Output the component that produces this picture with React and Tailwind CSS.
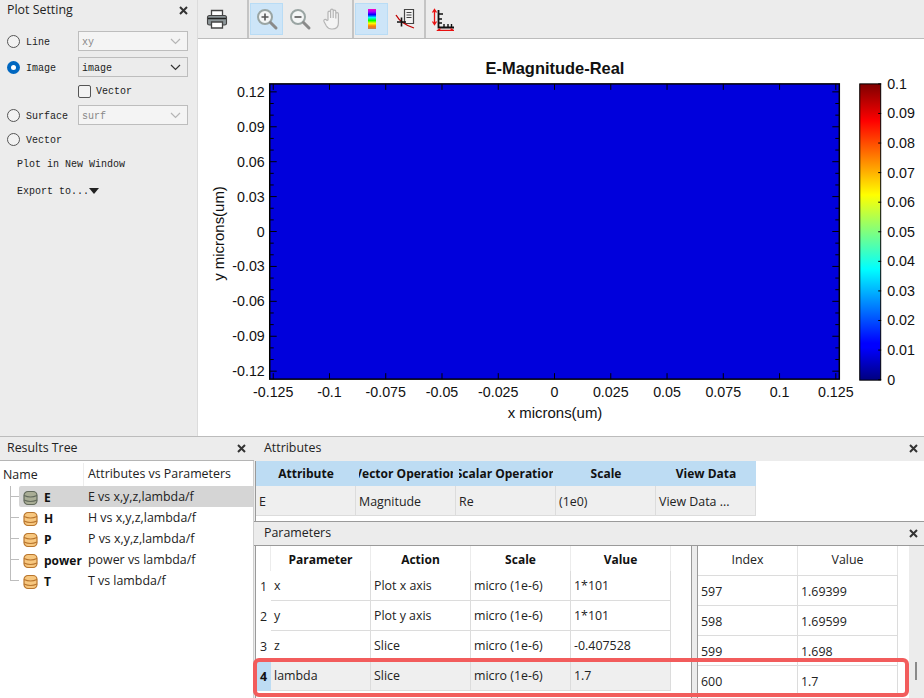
import React from "react";

const mono = "font-['Liberation_Mono',monospace] text-[10px] text-[#222]";
const ui = "font-['Open_Sans','Noto_Sans',sans-serif]";

function Close({ className = "" }) {
  return (
    <svg width="9" height="9" viewBox="0 0 9 9" className={className}>
      <path d="M1 1 8 8M8 1 1 8" stroke="#333" strokeWidth="2" />
    </svg>
  );
}

function Radio({ on }) {
  return on ? (
    <span className="flex h-[13px] w-[13px] shrink-0 items-center justify-center rounded-full bg-[#0067c0]">
      <span className="h-[5px] w-[5px] rounded-full bg-white" />
    </span>
  ) : (
    <span className="h-[13px] w-[13px] shrink-0 rounded-full border border-[#555] bg-[#f2f2f2]" />
  );
}

function Select({ value, disabled }) {
  return (
    <div className={`flex h-[20px] w-[110px] items-center justify-between border border-[#bdbdbd] pl-[3px] pr-[6px] ${disabled ? "bg-[#f4f4f4] text-[#888]" : "bg-[#ececec]"}`}>
      <span className={`pt-[2px] ${disabled ? "text-[#888]" : "text-[#222]"}`}>{value}</span>
      <svg width="11" height="7" viewBox="0 0 11 7">
        <path d="M1 1 5.500 5.500 10 1" fill="none" stroke={disabled ? "#b5b5b5" : "#333"} strokeWidth="1.200" />
      </svg>
    </div>
  );
}

function SettingRow({ on, label, value, disabled }) {
  return (
    <div className="flex h-[24px] items-center pl-[7px]">
      <Radio on={on} />
      <span className="ml-[6px] w-[52px] pt-[2px]">{label}</span>
      {value && <Select value={value} disabled={disabled} />}
    </div>
  );
}

function PlotSetting() {
  return (
    <aside className="flex w-[198px] shrink-0 flex-col border-r border-[#dcdcdc] bg-[#ececec]">
      <div className={`flex h-[29px] items-start justify-between pl-[7px] pr-[9px] pt-[1px] text-[12.400px] text-[#222] ${ui}`}>
        <span>Plot Setting</span>
        <Close className="mt-[5px]" />
      </div>
      <div className={mono}>
        <SettingRow label="Line" value="xy" disabled />
        <div className="mt-[2px]">
          <SettingRow on label="Image" value="image" />
        </div>
        <div className="flex h-[24px] items-center pl-[78px]">
          <span className="h-[13px] w-[13px] rounded-[2px] border border-[#555] bg-[#f2f2f2]" />
          <span className="ml-[5px] pt-[1px]">Vector</span>
        </div>
        <SettingRow label="Surface" value="surf" disabled />
        <SettingRow label="Vector" />
        <div className="mt-[1px] flex h-[24px] items-center pl-[17px]">Plot in New Window</div>
        <div className="mt-[3px] flex h-[24px] items-center pl-[17px]">
          Export to...
          <svg width="10" height="6" viewBox="0 0 10 6"><path d="M0 0h10L5 6z" fill="#222" /></svg>
        </div>
      </div>
    </aside>
  );
}

function Magnifier({ plus }) {
  return (
    <svg width="24" height="24" viewBox="0 0 24 24">
      <circle cx="10" cy="10" r="7" fill="#f4f6f6" stroke="#9aa5a3" strokeWidth="2" />
      <path d="M15.500 15.500 21 21" stroke="#8a8a8a" strokeWidth="3" strokeLinecap="round" />
      <path d={plus ? "M6.500 10h7M10 6.500v7" : "M6.500 10h7"} stroke="#555" strokeWidth="1.600" />
    </svg>
  );
}

function ToolBtn({ active, children }) {
  return (
    <div className={`flex h-[32px] w-[33px] items-center justify-center border ${active ? "border-[#b9dcf5] bg-[#cde5f8]" : "border-transparent"}`}>
      {children}
    </div>
  );
}

function Sep() {
  return <div className="h-[38px] w-[2px] shrink-0 bg-[#c4c4c4]" />;
}

function Toolbar() {
  return (
    <div className="flex h-[39px] shrink-0 items-center border-b border-[#bcbcbc] bg-[#ececec] pl-[2px]">
      <ToolBtn>
        <svg width="24" height="24" viewBox="0 0 24 24">
          <path d="M6.500 3.500h11v6h-11z" fill="#fff" stroke="#444" strokeWidth="1.300" />
          <path d="M2.500 10.500q0-2 2-2h15q2 0 2 2v6q0 1.500-2 1.500h-15q-2 0-2-1.500z" fill="#8d9699" stroke="#444" strokeWidth="1.100" />
          <path d="M3 11.500h18" stroke="#222" strokeWidth="1.500" />
          <path d="M6.500 15h11v6h-11z" fill="#fff" stroke="#444" strokeWidth="1.300" />
        </svg>
      </ToolBtn>
      <div className="w-[14px]" />
      <Sep />
      <div className="w-[1px]" />
      <ToolBtn active><Magnifier plus /></ToolBtn>
      <ToolBtn><Magnifier /></ToolBtn>
      <ToolBtn>
        <svg width="22" height="24" viewBox="0 0 22 24">
          <path d="M6 13V5.500a1.300 1.300 0 0 1 2.600 0V11V3.500a1.300 1.300 0 0 1 2.600 0V11V4.500a1.300 1.300 0 0 1 2.600 0V11.500V7a1.300 1.300 0 0 1 2.600 0V16q0 6-6 6h-1q-3 0-5-3L2 14.500q-.6-1.500.6-2t2.400 1z" fill="#f4f4f4" stroke="#b4b4b4" strokeWidth="1.200" />
        </svg>
      </ToolBtn>
      <div className="w-[3px]" />
      <Sep />
      <div className="w-[1px]" />
      <ToolBtn active>
        <div className="h-[20px] w-[8px] bg-[linear-gradient(to_bottom,#ff00c0,#a000ff,#0000ff,#00ffff,#00ff00,#ffff00,#ff8000,#c08060)]" />
      </ToolBtn>
      <ToolBtn>
        <svg width="24" height="24" viewBox="0 0 24 24">
          <path d="M11.500 2.500h9v14h-9z" fill="#f2f2f2" stroke="#444" strokeWidth="1.200" />
          <path d="M13.500 5.500h5M13.500 8h5M13.500 10.500h5" stroke="#444" />
          <path d="M3 8q5 9 18 13" fill="none" stroke="#c00000" strokeWidth="1.300" />
          <path d="M8.500 10.500v9M4 15h9" stroke="#111" strokeWidth="1.600" />
        </svg>
      </ToolBtn>
      <div className="w-[3px]" />
      <Sep />
      <div className="-ml-[1px]">
        <ToolBtn>
          <svg width="24" height="24" viewBox="0 0 24 24">
            <path d="M8.500 3v17.500H24" fill="none" stroke="#111" strokeWidth="1.800" />
            <path d="M9 7h4M9 12h3M9 16h3M14 20v-3M18 20v-3M21.500 20v-3" stroke="#111" strokeWidth="1.400" />
            <path d="M4.500 3v14M2.500 5.500l2-3 2 3M2.500 14.500l2 3 2-3" fill="none" stroke="#e81010" strokeWidth="1.300" />
            <path d="M8 23.500h15M10.500 21.500l-3 2 3 2M20.500 21.500l3 2-3 2" fill="none" stroke="#e81010" strokeWidth="1.300" />
          </svg>
        </ToolBtn>
      </div>
    </div>
  );
}

const Txt = ({ children, ...p }) => (
  <text fontFamily="'Liberation Sans', Arial, sans-serif" fontSize="14.300" fill="#111" {...p}>{children}</text>
);

function Chart() {
  const xLabels = ["-0.125", "-0.1", "-0.075", "-0.05", "-0.025", "0", "0.025", "0.05", "0.075", "0.1", "0.125"];
  const yLabels = ["0.12", "0.09", "0.06", "0.03", "0", "-0.03", "-0.06", "-0.09", "-0.12"];
  const cLabels = ["0.1", "0.09", "0.08", "0.07", "0.06", "0.05", "0.04", "0.03", "0.02", "0.01", "0"];
  const L = 71, R = 642, T = 45, B = 341;
  const xAt = (i) => 74.500 + i * 56.400;
  const yAt = (i) => 53 + i * 35;
  const minors = [];
  for (let i = 0; i < 8; i++) minors.push(yAt(i) + 35 / 3, yAt(i) + 70 / 3);
  return (
    <svg width="726" height="398" viewBox="0 0 726 398" className="block">
      <defs>
        <linearGradient id="jet" x1="0" y1="1" x2="0" y2="0">
          <stop offset="0" stopColor="#00007f" />
          <stop offset="0.11" stopColor="#0000ff" />
          <stop offset="0.125" stopColor="#0000ff" />
          <stop offset="0.375" stopColor="#00ffff" />
          <stop offset="0.5" stopColor="#7fff7f" />
          <stop offset="0.625" stopColor="#ffff00" />
          <stop offset="0.875" stopColor="#ff0000" />
          <stop offset="1" stopColor="#7f0000" />
        </linearGradient>
      </defs>
      <Txt x="357" y="35" fontSize="16.500" fontWeight="700" textAnchor="middle">E-Magnitude-Real</Txt>
      <rect x={L} y={T} width={R - L} height={B - T} fill="#0000dc" stroke="#000" strokeWidth="1.500" />
      {xLabels.map((t, i) => (
        <g key={t}>
          <path d={`M${xAt(i)} ${B}v-6M${xAt(i)} ${T}v6`} stroke="#000" />
          <Txt x={xAt(i)} y={B + 18} textAnchor="middle">{t}</Txt>
        </g>
      ))}
      {yLabels.map((t, i) => (
        <g key={t}>
          <path d={`M${L} ${yAt(i)}h7M${R} ${yAt(i)}h-7`} stroke="#000" />
          <Txt x="66" y={yAt(i) + 5} textAnchor="end">{t}</Txt>
        </g>
      ))}
      {minors.map((y) => (
        <path key={y} d={`M${L} ${y}h4M${R} ${y}h-4`} stroke="#000" />
      ))}
      <Txt x="357" y="380" fontSize="15" textAnchor="middle">x microns(um)</Txt>
      <Txt transform="translate(25 195) rotate(-90)" fontSize="15" textAnchor="middle">y microns(um)</Txt>
      <rect x="662.500" y={T} width="21" height={B - T + 1} fill="url(#jet)" stroke="#000" />
      {cLabels.map((t, i) => {
        const y = T + i * 29.650;
        return (
          <g key={t}>
            <path d={`M684 ${y}h-3`} stroke="#000" />
            <Txt x="690" y={y + 5}>{t}</Txt>
          </g>
        );
      })}
    </svg>
  );
}

function Db({ gray }) {
  const fill = gray ? "#a9ad95" : "#f7c77f";
  const stroke = gray ? "#626a5c" : "#b9762e";
  return (
    <svg width="15" height="16" viewBox="0 0 15 16" className="shrink-0">
      <rect x="1" y="1.500" width="13" height="13" rx="4" fill={fill} stroke={stroke} strokeWidth="1.200" />
      <path d="M1 5.500q6.500 3 13 0M1 10q6.500 3 13 0" fill="none" stroke={stroke} strokeWidth="1.200" />
    </svg>
  );
}

function ResultsTree() {
  const rows = [
    ["E", "E vs x,y,z,lambda/f"],
    ["H", "H vs x,y,z,lambda/f"],
    ["P", "P vs x,y,z,lambda/f"],
    ["power", "power vs lambda/f"],
    ["T", "T vs lambda/f"],
  ];
  return (
    <section className={`flex w-[254px] shrink-0 flex-col text-[12.400px] text-[#222] ${ui}`}>
      <div className="flex h-[24px] shrink-0 items-center justify-between border-b border-[#b5b5b5] bg-[#ececec] pl-[7px] pr-[8px]">
        <span>Results Tree</span>
        <Close />
      </div>
      <div className="flex-1 border-r border-[#cfcfcf] bg-white">
        <div className="flex h-[25px] items-center pt-[2px]">
          <span className="w-[84px] border-r border-[#ededed] pl-[3px] leading-[23px]">Name</span>
          <span className="pl-[4px]">Attributes vs Parameters</span>
        </div>
        <div className="relative">
          <div className="absolute bottom-[10px] left-[10px] top-0 w-px bg-[#bdbdbd]" />
          {rows.map(([n, a], i) => (
            <div key={n} className="flex h-[21px] items-center">
              <div className="ml-[10px] h-px w-[9px] shrink-0 bg-[#bdbdbd]" />
              <div className={`flex h-full flex-1 items-center rounded-l-[2px] pl-[4px] pt-[2px] ${i === 0 ? "bg-[#d5d5d5]" : ""}`}>
                <Db gray={i === 0} />
                <span className="ml-[6px] w-[44px] text-[12px] font-bold text-[#111]">{n}</span>
                <span>{a}</span>
              </div>
            </div>
          ))}
        </div>
      </div>
    </section>
  );
}

function Panel({ title, close }) {
  return (
    <div className="flex h-full items-center justify-between pl-[10px] pr-[6px]">
      <span>{title}</span>
      {close && <Close />}
    </div>
  );
}

function Head({ children }) {
  return (
    <div className="flex h-full w-[100px] shrink-0 items-center justify-center text-[12px] font-bold text-[#111]">
      <span className="flex w-[94px] justify-center overflow-hidden">
        <span className="shrink-0 whitespace-nowrap">{children}</span>
      </span>
    </div>
  );
}

function Attributes() {
  return (
    <div className="ml-px h-[60px] shrink-0 border-l border-[#9a9a9a] bg-white">
      <div className="flex h-[25px] w-[500px] bg-[#bddcf3]">
        <Head>Attribute</Head>
        <Head>Vector Operation</Head>
        <Head>Scalar Operation</Head>
        <Head>Scale</Head>
        <Head>View Data</Head>
      </div>
      <div className="flex h-[30px] w-[500px] bg-[#efefef]">
        {["E", "Magnitude", "Re", "(1e0)", "View Data ..."].map((t) => (
          <div key={t} className="flex w-[100px] items-center border-b border-r border-[#dcdcdc] pl-[3px] pt-[3px]">{t}</div>
        ))}
      </div>
    </div>
  );
}

function ParamTable() {
  const rows = [
    ["1", "x", "Plot x axis", "micro (1e-6)", "1*101"],
    ["2", "y", "Plot y axis", "micro (1e-6)", "1*101"],
    ["3", "z", "Slice", "micro (1e-6)", "-0.407528"],
    ["4", "lambda", "Slice", "micro (1e-6)", "1.7"],
  ];
  return (
    <div className="ml-px w-[437px] shrink-0 border-x border-[#9a9a9a] bg-white">
      <div className="flex h-[25px]">
        <div className="w-[15px] shrink-0 border-r border-[#ececec]" />
        {["Parameter", "Action", "Scale", "Value"].map((t) => (
          <div key={t} className="flex h-full w-[100px] shrink-0 items-center justify-center border-r border-[#ececec] pt-[2px] text-[12px] font-bold text-[#111]">{t}</div>
        ))}
      </div>
      {rows.map((r, i) => {
        const sel = i === 3;
        return (
          <div key={r[0]} className="flex h-[30px]">
            <div className={`flex w-[15px] shrink-0 items-center justify-center pt-[2px] ${sel ? "bg-[#bddcf3] font-bold text-[#111]" : ""}`}>{r[0]}</div>
            {r.slice(1).map((c, j) => (
              <div key={j} className={`flex w-[100px] shrink-0 items-center border-b border-r border-[#dcdcdc] pl-[3px] pt-[2px] ${sel ? "bg-[#efefef]" : ""}`}>{c}</div>
            ))}
          </div>
        );
      })}
    </div>
  );
}

function IndexTable() {
  const rows = [["597", "1.69399"], ["598", "1.69599"], ["599", "1.698"], ["600", "1.7"]];
  return (
    <div className="ml-[5px] flex min-w-0 flex-1">
      <div className="w-[212px] shrink-0 border-l border-[#9a9a9a] bg-white">
        <div className="flex h-[30px] w-[200px] border-b border-[#dcdcdc]">
          {["Index", "Value"].map((t) => (
            <div key={t} className="flex w-[100px] items-center justify-center border-r border-[#e4e4e4]">{t}</div>
          ))}
        </div>
        {rows.map((r) => (
          <div key={r[0]} className="flex h-[30px] w-[200px]">
            {r.map((c) => (
              <div key={c} className="flex w-[100px] items-center border-b border-r border-[#dcdcdc] pl-[3px] pt-[4px]">{c}</div>
            ))}
          </div>
        ))}
      </div>
      <div className="relative flex-1 bg-[#ececec]">
        <div className="absolute left-[6px] top-[116px] h-[18px] w-[2px] bg-[#8a8a8a]" />
      </div>
    </div>
  );
}

export default function App() {
  return (
    <div className="relative flex h-[698px] w-[924px] flex-col overflow-hidden bg-white">
      <div className="flex h-[437px] shrink-0 border-b border-[#bcbcbc]">
        <PlotSetting />
        <main className="flex min-w-0 flex-1 flex-col">
          <Toolbar />
          <Chart />
        </main>
      </div>
      <div className="flex min-h-0 flex-1 bg-[#ececec]">
        <ResultsTree />
        <section className={`flex min-w-0 flex-1 flex-col text-[12.400px] text-[#222] ${ui}`}>
          <div className="h-[24px] shrink-0 pb-[2px]"><Panel title="Attributes" close /></div>
          <Attributes />
          <div className="h-[24px] shrink-0 border-t border-[#9a9a9a]"><Panel title="Parameters" close /></div>
          <div className="flex min-h-0 flex-1 border-t border-[#9a9a9a]">
            <ParamTable />
            <IndexTable />
          </div>
        </section>
      </div>
      <div className="pointer-events-none absolute left-[253px] top-[658px] h-[39px] w-[656px] rounded-[6px] border-[4px] border-[#f25c5c]" />
    </div>
  );
}
